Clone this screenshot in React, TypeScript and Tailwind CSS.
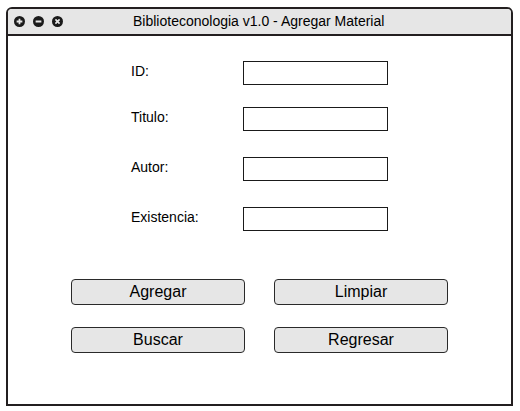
import { Fragment } from 'react'

const fields = [
  { label: 'ID:', mt: 'mt-0' },
  { label: 'Titulo:', mt: 'mt-[22px]' },
  { label: 'Autor:', mt: 'mt-[26px]' },
  { label: 'Existencia:', mt: 'mt-[26px]' },
]

function WindowIcon({ kind }: { kind: 'plus' | 'minus' | 'close' }) {
  return (
    <svg width="11" height="11" viewBox="0 0 10 10">
      <circle cx="5" cy="5" r="5" fill="#1a1a1a" />
      {kind === 'plus' && (
        <path d="M5 2.4v5.2M2.4 5h5.2" stroke="#e6e6e6" strokeWidth="1.6" />
      )}
      {kind === 'minus' && <path d="M2.4 5h5.2" stroke="#e6e6e6" strokeWidth="1.8" />}
      {kind === 'close' && (
        <path d="M3.1 3.1l3.8 3.8M6.9 3.1L3.1 6.9" stroke="#e6e6e6" strokeWidth="1.5" />
      )}
    </svg>
  )
}

function ActionButton({ text }: { text: string }) {
  return (
    <button className="w-[174px] h-[26px] rounded-[4px] border border-[#2a2a2a] bg-[#e6e6e6] text-[16px] leading-none text-black">
      {text}
    </button>
  )
}

export default function App() {
  return (
    <div className="w-[520px] h-[411px] bg-white pt-[7px] pl-[6px] font-['Liberation_Sans',Arial,sans-serif]">
      <div className="w-[507px] h-[399px] border-2 border-[#231f20] rounded-t-[6px] flex flex-col overflow-hidden">
        {/* Title bar */}
        <div className="h-[27px] bg-[#e6e6e6] border-b-2 border-[#231f20] flex items-center px-[6px] shrink-0">
          <div className="flex items-center gap-[8px] w-[110px]">
            <WindowIcon kind="plus" />
            <WindowIcon kind="minus" />
            <WindowIcon kind="close" />
          </div>
          <div className="text-[14px] text-black pl-[9px]">
            Biblioteconologia v1.0 - Agregar Material
          </div>
        </div>

        {/* Form */}
        <div className="pt-[25px] pl-[123px]">
          {fields.map(f => (
            <Fragment key={f.label}>
              <div className={`flex items-center ${f.mt}`}>
                <span className="w-[112px] text-[14px] text-black -mt-[4px]">{f.label}</span>
                <div className="w-[145px] h-[24px] border border-[#1a1a1a] bg-white" />
              </div>
            </Fragment>
          ))}
        </div>

        {/* Buttons */}
        <div className="pl-[63px] pt-[48px] grid grid-cols-[174px_174px] gap-x-[29px] gap-y-[22px]">
          <ActionButton text="Agregar" />
          <ActionButton text="Limpiar" />
          <ActionButton text="Buscar" />
          <ActionButton text="Regresar" />
        </div>
      </div>
    </div>
  )
}
